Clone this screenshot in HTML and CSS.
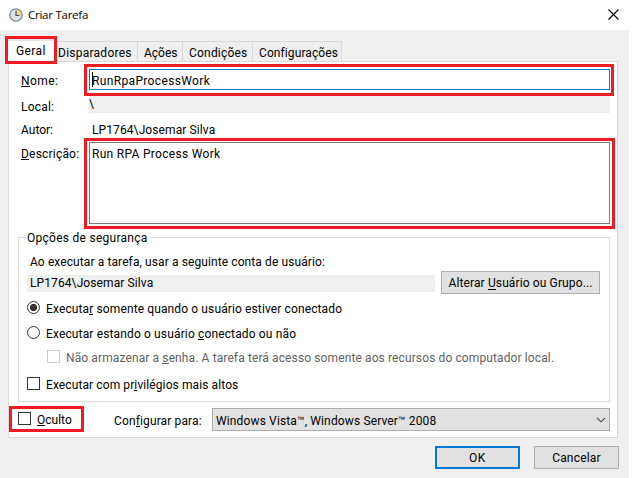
FILE: index.html
```html
<!DOCTYPE html>
<html lang="pt-BR">
<head>
<meta charset="utf-8">
<title>Criar Tarefa</title>
<link rel="stylesheet" href="styles.css">
</head>
<body>
<div class="dialog">
  <header class="titlebar">
    <svg class="clock" width="14" height="14" viewBox="0 0 14 14">
      <circle cx="7" cy="7" r="6.2" fill="#d9e3ea" stroke="#85888b" stroke-width="1.3"/>
      <path d="M7 7V1.8A5.2 5.2 0 0 1 12.2 7Z" fill="#f3d28c"/>
      <path d="M7 2.8V7.5H10.5" fill="none" stroke="#4a4e55" stroke-width="1.2"/>
    </svg>
    <h1 class="title">Criar Tarefa</h1>
    <svg class="close" width="11" height="11" viewBox="0 0 11 11"><path d="M.5 .5L10.500 10.500M10.500 .5L.5 10.500" stroke="#000" stroke-width="1.15"/></svg>
  </header>
  <nav class="tabs">
    <div class="tab active mark"><span>Geral</span></div>
    <div class="tab disp"><span>Disparadores</span></div>
    <div class="tab acoes"><span>Ações</span></div>
    <div class="tab cond"><span>Condições</span></div>
    <div class="tab conf"><span>Configurações</span></div>
  </nav>
  <main class="panel">
    <div class="row name-row">
      <label class="label nome"><u>N</u>ome:</label>
      <div class="mark name-mark"><div class="input"><i class="caret"></i><span class="t-name">RunRpaProcessWork</span></div></div>
    </div>
    <div class="row local-row">
      <span class="label local">Local:</span>
      <div class="readonly path">\</div>
    </div>
    <div class="row author-row">
      <span class="label autor">Autor:</span>
      <span class="author t-author">LP1764\Josemar Silva</span>
    </div>
    <div class="row desc-row">
      <label class="label desc"><u>D</u>escrição:</label>
      <div class="mark desc-mark"><div class="textarea"><span class="t-desc">Run RPA Process Work</span></div></div>
    </div>
    <fieldset class="group">
      <legend><span class="t-legend">Opções de segurança</span></legend>
      <p class="intro"><span class="t-intro">Ao executar a tarefa, usar a seguinte conta de usuário:</span></p>
      <div class="account-row">
        <div class="readonly account"><span class="t-author">LP1764\Josemar Silva</span></div>
        <div class="button change"><span class="t-change">Alterar <u>U</u>suário ou Grupo...</span></div>
      </div>
      <div class="option first"><i class="radio on"></i><span class="t-r1">Executa<u>r</u> somente quando o usuário estiver conectado</span></div>
      <div class="option second"><i class="radio"></i><span class="t-r2">Executar estando o usuário <u>c</u>onectado ou não</span></div>
      <div class="option third"><i class="check"></i><span class="t-c1">Não armazenar a <u>s</u>enha. A tarefa terá acesso somente aos recursos do computador local.</span></div>
      <div class="option fourth"><i class="check"></i><span class="t-c2">Executar com pr<u>i</u>vilégios mais altos</span></div>
    </fieldset>
    <div class="bottom">
      <div class="mark hidden-mark"><i class="check"></i><span class="t-oculto"><u>O</u>culto</span></div>
      <span class="conf-label">Con<u>f</u>igurar para:</span>
      <div class="select"><span class="t-select">Windows Vista™, Windows Server™ 2008</span>
        <svg width="10" height="6" viewBox="0 0 10 6"><path d="M1 .8L5 4.800L9 .8" fill="none" stroke="#444" stroke-width="1.1"/></svg>
      </div>
    </div>
  </main>
  <footer class="actions">
    <div class="button ok"><span>OK</span></div>
    <div class="button cancel"><span class="t-cancel">Cancelar</span></div>
  </footer>
</div>
</body>
</html>
```
FILE: styles.css
```css
* { box-sizing: border-box; }
body { margin: 0; background: #fff; color: #000; font: 12px/16px Roboto, "Liberation Sans", sans-serif; overflow: hidden; }
.dialog { width: 629px; height: 478px; background: #efefef; }
span, label { white-space: nowrap; }
u { text-decoration: none; box-shadow: inset 0 -1px #000; display: inline-block; height: 14px; line-height: 16px; vertical-align: top; }
i { flex: none; display: block; }
svg { flex: none; display: block; }

.titlebar { display: flex; height: 30px; background: #fff; padding-left: 8px; }
.clock { margin: 8px 0 0 1px; }
.title { margin: 7px 0 0 5px; font: 11.5px/16px "Open Sans", "Noto Sans", sans-serif; letter-spacing: -.25px; }
.close { margin: 9px 10px 0 auto; }

.mark { border: 3px solid #ed1c24; background: #fff; }
.tabs { display: flex; height: 31px; padding: 6px 0 0 5px; position: relative; }
.tab { height: 20px; margin-top: 5px; border: solid #d9d9d9; border-width: 1px 1px 0 0; padding-top: 3px; }
.tab.active { width: 52px; height: 28px; margin: 0; border: 3px solid #ed1c24; padding: 4px 0 0 8px; box-shadow: inset 0 2px #e4e4e4; letter-spacing: .4px; }
.disp { width: 81px; padding-left: 1px; letter-spacing: .25px; }
.acoes { width: 45px; padding-left: 6px; }
.cond { width: 70px; padding-left: 6px; letter-spacing: .2px; }
.conf { width: 89px; padding-left: 6px; letter-spacing: .1px; }

.panel { width: 610px; height: 377px; margin-left: 8px; background: #fff; border: 1px solid #d9d9d9; }
.row { display: flex; padding-left: 12px; }
.label { width: 63px; flex: none; letter-spacing: .2px; }
.name-row { height: 34px; padding-top: 2px; }
.nome { margin-top: 9px; letter-spacing: .4px; }
.name-mark { width: 530px; height: 32px; padding: 2px; }
.input { width: 521px; height: 21px; border: 1px solid #0078d7; padding: 3px 0 0 2px; position: relative; }
.caret { position: absolute; left: 2px; top: 2px; width: 1px; height: 15px; background: #000; }
.local-row { height: 17px; }
.local { width: 68px; margin-top: 3px; }
.readonly { background: #efefef; height: 17px; }
.path { width: 521px; line-height: 17px; }
.author-row { height: 25px; padding-top: 9px; }
.autor { width: 71px; letter-spacing: 0; }
.desc-row { height: 91px; }
.desc { margin-top: 8px; }
.desc-mark { width: 531px; height: 91px; padding: 1px 2px; }
.textarea { width: 521px; height: 82px; border: 1px solid #7a7a7a; padding: 3px 2px; }

.t-name { letter-spacing: .35px; }
.t-desc { letter-spacing: .3px; }
.t-author { letter-spacing: .1px; }
.t-legend { letter-spacing: .27px; }
.t-intro { letter-spacing: .1px; }
.t-change { letter-spacing: .12px; }
.t-r1 { letter-spacing: .12px; }
.t-r2 { letter-spacing: .14px; }
.t-c1 { letter-spacing: .115px; }
.t-c2 { letter-spacing: .1px; }
.t-select { letter-spacing: .14px; }
.t-cancel { letter-spacing: .2px; }

.group { width: 592px; height: 172px; margin: 1px 0 0 9px; padding: 0 0 0 8px; border: 1px solid #dcdcdc; min-width: 0; }
legend { padding: 0 2px 0 1px; margin-left: -1px; height: 15px; }
.intro { margin: 9px 0 0 3px; height: 17px; }
.account-row { display: flex; gap: 6px; height: 23px; }
.account { width: 408px; margin-top: 4px; padding-left: 3px; line-height: 17px; }
.button { height: 23px; border: 1px solid #adadad; background: #e1e1e1; text-align: center; line-height: 23px; }
.button u { height: 18px; line-height: 23px; }
.change { width: 159px; }
.option { display: flex; height: 16px; }
.radio { width: 13px; height: 13px; border: 1px solid #333; border-radius: 50%; background: #fff; margin-right: 6px; }
.radio.on { background: radial-gradient(circle, #333 3.3px, #fff 3.9px); }
.check { width: 13px; height: 13px; border: 1px solid #333; background: #fff; margin-right: 6px; }
.first { margin-top: 7px; }
.second { margin-top: 9px; }
.third { margin: 8px 0 0 20px; color: #5f5f5f; }
.third .check { border-color: #ccc; }
.third u { box-shadow: inset 0 -1px #5f5f5f; }
.fourth { margin-top: 11px; }

.bottom { display: flex; height: 34px; padding-top: 4px; }
.hidden-mark { display: flex; width: 75px; height: 26px; padding: 3px 0 0 6px; }
.conf-label { width: 98px; margin: 7px 0 0 30px; letter-spacing: .13px; }
.select { display: flex; justify-content: space-between; width: 398px; height: 23px; margin-top: 2px; border: 1px solid #adadad; background: #e1e1e1; padding: 4px 3px 0; }
.select svg { margin: 4px 0 0; }

.actions { display: flex; justify-content: flex-end; gap: 14px; padding: 8px 10px 0 0; }
.ok, .cancel { width: 85px; }
.ok { border: 2px solid #0078d7; line-height: 21px; letter-spacing: .5px; }
```
